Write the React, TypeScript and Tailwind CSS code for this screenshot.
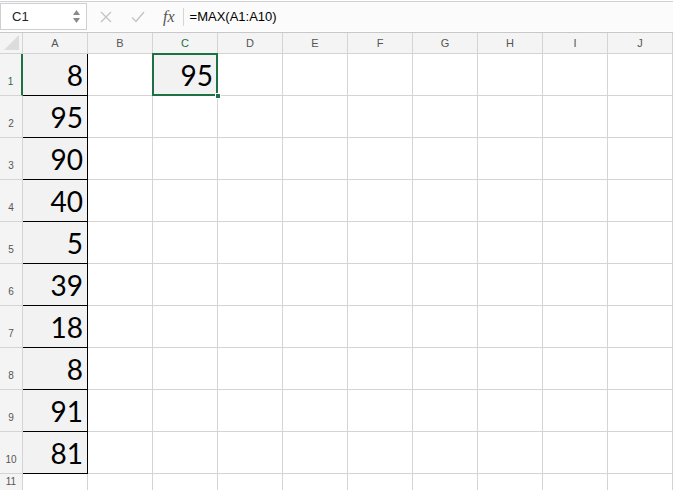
import React from 'react'

const cols = ['A', 'B', 'C', 'D', 'E', 'F', 'G', 'H', 'I', 'J']
const values = [8, 95, 90, 40, 5, 39, 18, 8, 91, 81]

const ui = { fontFamily: '"Liberation Sans", Arial, sans-serif' }
const num = { fontFamily: 'Lato, "Open Sans", sans-serif' }

function FormulaBar() {
  return (
    <div className="flex h-[30px] border-t border-[#d0d0d0] bg-[#fbfbfb]" style={ui}>
      <div className="mt-[1px] flex h-[27px] w-[87px] items-center justify-between border border-[#cfcfcf] bg-white pl-[11px] pr-[6px]">
        <span className="text-[13px] text-[#222]">C1</span>
        <div className="flex flex-col gap-[3px]">
          <svg width="7" height="5" viewBox="0 0 7 5"><path d="M3.5 0L7 5H0z" fill="#8a8a8a" /></svg>
          <svg width="7" height="5" viewBox="0 0 7 5"><path d="M0 0h7L3.5 5z" fill="#8a8a8a" /></svg>
        </div>
      </div>
      <div className="flex flex-1 items-center">
        <svg className="ml-[13px]" width="12" height="12" viewBox="0 0 12 12">
          <path d="M1 1L11 11M11 1L1 11" stroke="#c4c4c4" strokeWidth="1.4" fill="none" />
        </svg>
        <svg className="ml-[19px]" width="14" height="12" viewBox="0 0 14 12">
          <path d="M1 6.5L5 10.5L13 1" stroke="#c4c4c4" strokeWidth="1.4" fill="none" />
        </svg>
        <span
          className="ml-[18px] text-[16px] italic text-[#555]"
          style={{ fontFamily: '"Liberation Serif", "Times New Roman", serif' }}
        >
          fx
        </span>
        <div className="ml-[8px] h-[18px] w-px bg-[#d6d6d6]" />
        <span className="ml-[6px] text-[13px] text-black">=MAX(A1:A10)</span>
      </div>
    </div>
  )
}

function ColumnHeaders() {
  return (
    <div className="flex h-[22px] border-t border-[#c8c8c8] bg-[#f4f4f4]" style={ui}>
      <div className="relative h-full w-[23px] border-b border-r border-[#d4d4d4]">
        <svg className="absolute bottom-[3px] right-[3px]" width="15" height="15" viewBox="0 0 15 15">
          <path d="M15 0V15H0z" fill="#dcdcdc" />
        </svg>
      </div>
      {cols.map((c) => (
        <div
          key={c}
          className={
            c === 'C'
              ? 'flex w-[65px] items-center justify-center border-b border-r border-[#d4d4d4] text-[11px] text-[#1e7145]'
              : 'flex w-[65px] items-center justify-center border-b border-r border-[#d4d4d4] text-[11px] text-[#555]'
          }
        >
          {c}
        </div>
      ))}
    </div>
  )
}

function Row({ index }: { index: number }) {
  const value = values[index]
  const rowNo = index + 1
  const tall = index < 10
  return (
    <div className={tall ? 'flex h-[42px]' : 'flex h-[18px]'}>
      <div
        className={
          rowNo === 1
            ? 'flex w-[23px] items-end justify-center border-b border-r-2 border-b-[#d4d4d4] border-r-[#1e7145] bg-[#f4f4f4] pb-[6px] text-[10px] text-[#1e7145]'
            : 'flex w-[23px] items-end justify-center border-b border-r border-[#d4d4d4] bg-[#f4f4f4] pb-[6px] text-[10px] text-[#555]'
        }
        style={ui}
      >
        <span className={tall ? '' : 'mb-[-4px]'}>{rowNo}</span>
      </div>
      {cols.map((c) => {
        if (c === 'A' && tall) {
          return (
            <div
              key={c}
              className="flex w-[65px] items-end justify-end border-b border-r border-black bg-[#f2f2f2] pb-[6px] pr-[4px] text-[28px] leading-none text-black"
              style={num}
            >
              {value}
            </div>
          )
        }
        if (c === 'C' && rowNo === 1) {
          return (
            <div key={c} className="relative w-[65px] border-b border-r border-[#d4d4d4]">
              <div
                className="absolute -left-[1px] -top-[1px] bottom-[-1px] right-[-1px] flex items-end justify-end border-2 border-[#1e7145] bg-[#f2f2f2] pb-[5px] pr-[3px] text-[28px] leading-none text-black"
                style={num}
              >
                95
              </div>
              <div className="absolute bottom-[-4px] right-[-4px] h-[6px] w-[6px] border border-white bg-[#1e7145]" />
            </div>
          )
        }
        return <div key={c} className="w-[65px] border-b border-r border-[#d4d4d4]" />
      })}
    </div>
  )
}

export default function App() {
  return (
    <div className="h-[490px] w-[673px] overflow-hidden bg-white">
      <div className="h-[1px] bg-white" />
      <FormulaBar />
      <div className="h-[1px] bg-white" />
      <ColumnHeaders />
      {Array.from({ length: 11 }, (_, i) => (
        <Row key={i} index={i} />
      ))}
    </div>
  )
}
